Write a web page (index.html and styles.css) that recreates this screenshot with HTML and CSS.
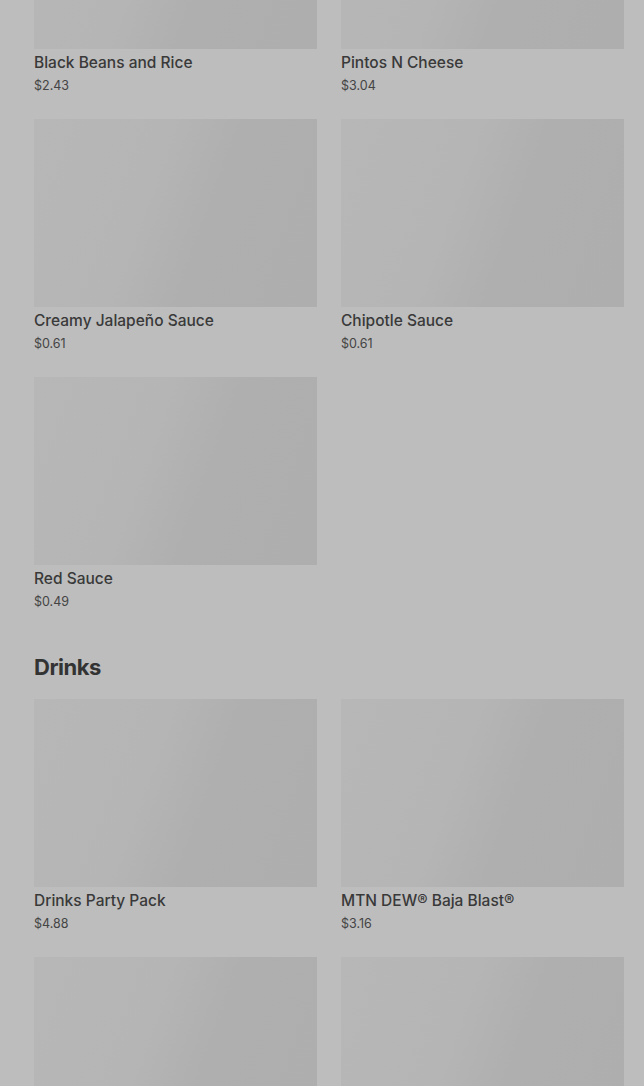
FILE: index.html
```html
<!DOCTYPE html>
<html lang="en">
<head>
    <meta charset="UTF-8">
    <meta name="viewport" content="width=device-width, initial-scale=1.0">
    <title>Menu</title>
    <link rel="stylesheet" href="styles.css">
</head>
<body>

    <main class="menu">
        <!-- Sides (scrolled part way) -->
        <section class="menu-section scrolled">
            <div class="item-grid">
                <div class="item">
                    <div class="item-image"></div>
                    <p class="item-name">Black Beans and Rice</p>
                    <p class="item-price">$2.43</p>
                </div>
                <div class="item">
                    <div class="item-image"></div>
                    <p class="item-name">Pintos N Cheese</p>
                    <p class="item-price">$3.04</p>
                </div>
                <div class="item">
                    <div class="item-image"></div>
                    <p class="item-name">Creamy Jalapeño Sauce</p>
                    <p class="item-price">$0.61</p>
                </div>
                <div class="item">
                    <div class="item-image"></div>
                    <p class="item-name">Chipotle Sauce</p>
                    <p class="item-price">$0.61</p>
                </div>
                <div class="item">
                    <div class="item-image"></div>
                    <p class="item-name">Red Sauce</p>
                    <p class="item-price">$0.49</p>
                </div>
            </div>
        </section>

        <section class="menu-section">
            <h2 class="section-title">Drinks</h2>
            <div class="item-grid">
                <div class="item">
                    <div class="item-image"></div>
                    <p class="item-name">Drinks Party Pack</p>
                    <p class="item-price">$4.88</p>
                </div>
                <div class="item">
                    <div class="item-image"></div>
                    <p class="item-name">MTN DEW® Baja Blast®</p>
                    <p class="item-price">$3.16</p>
                </div>
                <div class="item">
                    <div class="item-image"></div>
                    <p class="item-name">&nbsp;</p>
                    <p class="item-price">&nbsp;</p>
                </div>
                <div class="item">
                    <div class="item-image"></div>
                    <p class="item-name">&nbsp;</p>
                    <p class="item-price">&nbsp;</p>
                </div>
            </div>
        </section>
    </main>

</body>
</html>
```

FILE: styles.css
```css
* {
    margin: 0;
    padding: 0;
    box-sizing: border-box;
}

html, body {
    height: 100%;
    overflow: hidden;
}

body {
    font-family: 'Inter', 'Noto Sans', sans-serif;
    background-color: #bdbdbd;
    color: #3a3a3a;
}

.menu {
    padding: 0 20px 0 34px;
}

.menu-section.scrolled {
    margin-top: -139px;
}

.item-grid {
    display: grid;
    grid-template-columns: 1fr 1fr;
    column-gap: 24px;
}

.item {
    padding-bottom: 23px;
}

.item-image {
    height: 188px;
    background: linear-gradient(110deg, #b7b7b7 0%, #b5b5b5 40%, #afafaf 60%, #aeaeae 100%);
}

.item-name {
    margin-top: 4px;
    font-size: 15.5px;
    font-weight: 500;
    line-height: 20px;
    color: #393939;
}

.item-price {
    margin-top: 3px;
    font-size: 12.5px;
    line-height: 20px;
    color: #444;
}

.section-title {
    margin-top: 16px;
    margin-bottom: 16px;
    font-size: 22px;
    font-weight: 700;
    line-height: 32px;
    letter-spacing: -0.5px;
    color: #333;
}
```
